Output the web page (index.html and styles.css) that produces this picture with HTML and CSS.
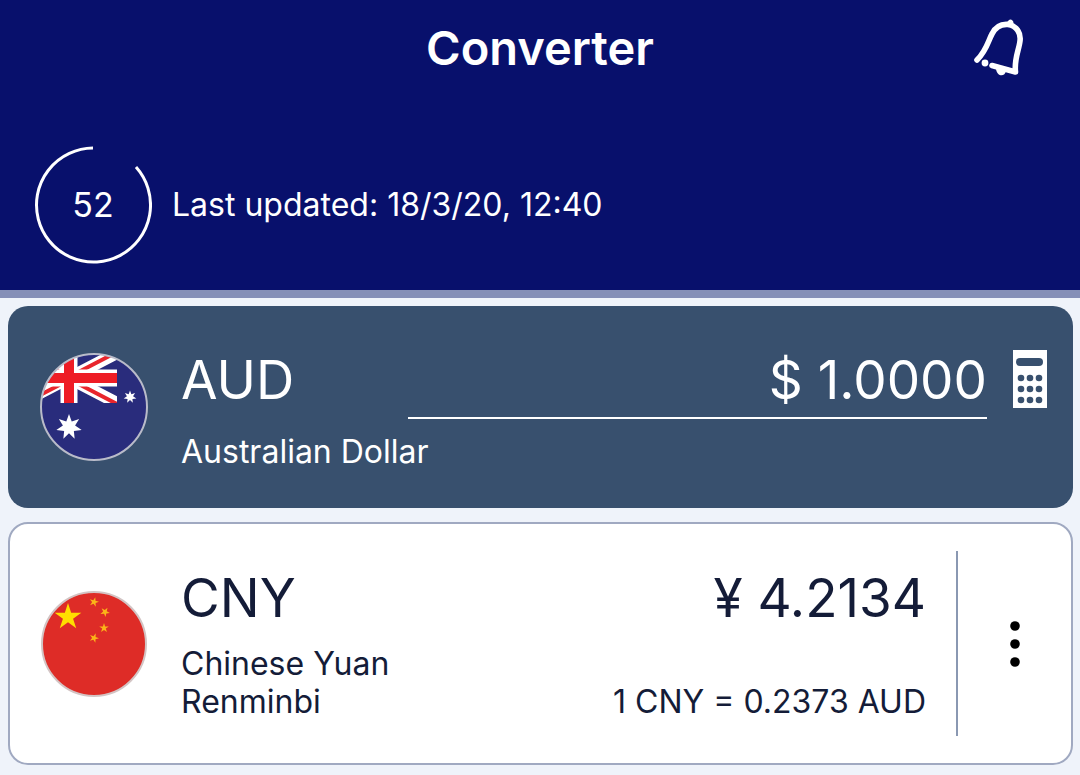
FILE: index.html
```html
<!DOCTYPE html>
<html lang="en">
<head>
<meta charset="utf-8">
<meta name="viewport" content="width=device-width, initial-scale=1">
<title>Converter</title>
<link rel="stylesheet" href="styles.css">
</head>
<body>
<svg class="symbols" aria-hidden="true">
  <defs>
    <polygon id="star5" points="0,-10 2.25,-3.09 9.51,-3.09 3.63,1.18 5.88,8.09 0,3.82 -5.88,8.09 -3.63,1.18 -9.51,-3.09 -2.25,-3.09"/>
    <polygon id="star7" points="0,-10 2.08,-4.32 7.82,-6.23 4.68,-1.07 9.75,2.23 3.75,2.99 4.34,9.01 0,4.8 -4.34,9.01 -3.75,2.99 -9.75,2.23 -4.68,-1.07 -7.82,-6.23 -2.08,-4.32"/>
    <clipPath id="disc"><circle cx="54" cy="55" r="53"/></clipPath>
    <clipPath id="canton"><rect x="-19" y="1" width="96" height="50"/></clipPath>
  </defs>
</svg>

<header class="header">
  <div class="titlebar">
    <h1 class="title">Converter</h1>
    <button class="icon-button bell" type="button" aria-label="Alerts">
      <svg width="60" height="64" viewBox="0 0 60 64" fill="none" stroke="#fff" stroke-width="5.6" stroke-linecap="round" stroke-linejoin="round">
        <path d="M7 44C17 34 18 25 22 18C26 10 32 8 38 8.500C47 10 51 17 50 25C49 34 44 43 45.500 56L22 49.500"/>
        <path d="M39 8L40.500 6.500"/>
        <circle cx="15" cy="47" r="3.400" fill="#fff" stroke="none"/>
        <path d="M26 53C27 61 35 61 36 55Z" fill="#fff" stroke="none"/>
      </svg>
    </button>
  </div>
  <div class="status">
    <div class="timer">
      <svg class="timer-ring" viewBox="0 0 118 118" fill="none" stroke="#fff" stroke-width="3">
        <path d="M59 2A57 57 0 1 0 102 21"/>
      </svg>
      <span class="timer-value">52</span>
    </div>
    <p class="updated">Last updated: 18/3/20, 12:40</p>
  </div>
</header>

<main class="list">
  <section class="card card-base">
    <svg class="flag" viewBox="0 0 108 110" role="img" aria-label="Australia">
      <g clip-path="url(#disc)">
        <rect width="108" height="110" fill="#292c7c"/>
        <g clip-path="url(#canton)">
          <path d="M-19 1L77 51M-19 51L77 1" stroke="#fff" stroke-width="12"/>
          <path d="M29 27L77 52M29 25L77 0M-19 0L29 25M-19 53L29 28" stroke="#e8252c" stroke-width="4"/>
          <path d="M29 0V51M-19 26H77" stroke="#fff" stroke-width="17"/>
          <path d="M29 0V51M-19 26H77" stroke="#ee1c25" stroke-width="10"/>
        </g>
        <use href="#star7" fill="#fff" transform="translate(29 75) scale(1.3)"/>
        <use href="#star7" fill="#fff" transform="translate(90 45) scale(.65)"/>
      </g>
      <circle cx="54" cy="55" r="53" fill="none" stroke="#b9bbc9" stroke-width="2"/>
    </svg>
    <div class="details">
      <div class="row">
        <label class="code" for="amount">AUD</label>
        <input class="amount" id="amount" type="text" inputmode="decimal" value="$ 1.0000">
      </div>
      <p class="name">Australian Dollar</p>
    </div>
    <button class="icon-button calculator" type="button" aria-label="Calculator">
      <svg width="34" height="58" viewBox="0 0 34 58">
        <rect width="34" height="58" fill="#fff"/>
        <g fill="#38506e">
          <rect x="3" y="8" width="27" height="8" rx="4"/>
          <circle cx="8" cy="28" r="3.300"/><circle cx="17" cy="28" r="3.300"/><circle cx="26" cy="28" r="3.300"/>
          <circle cx="8" cy="39" r="3.300"/><circle cx="17" cy="39" r="3.300"/><circle cx="26" cy="39" r="3.300"/>
          <circle cx="8" cy="50" r="3.300"/><circle cx="17" cy="50" r="3.300"/><circle cx="26" cy="50" r="3.300"/>
        </g>
      </svg>
    </button>
  </section>

  <section class="card card-quote">
    <svg class="flag" viewBox="0 0 108 110" role="img" aria-label="China">
      <circle cx="54" cy="55" r="52" fill="#de2c27" stroke="#d3c4c4" stroke-width="2"/>
      <g fill="#ffde00">
        <use href="#star5" transform="translate(28 28) scale(1.4)"/>
        <g fill="#fbb418">
          <use href="#star5" transform="translate(54 13) rotate(15) scale(.5)"/>
          <use href="#star5" transform="translate(65 23) rotate(30) scale(.5)"/>
          <use href="#star5" transform="translate(64 39) scale(.5)"/>
          <use href="#star5" transform="translate(54 49) rotate(20) scale(.5)"/>
        </g>
      </g>
    </svg>
    <div class="details">
      <h2 class="code">CNY</h2>
      <p class="name">Chinese Yuan<br>Renminbi</p>
    </div>
    <div class="quote">
      <p class="value">¥ 4.2134</p>
      <p class="rate">1 CNY = 0.2373 AUD</p>
    </div>
    <div class="actions">
      <button class="icon-button" type="button" aria-label="More options">
        <svg width="12" height="48" viewBox="0 0 12 48" fill="#000">
          <circle cx="6" cy="6" r="4.800"/><circle cx="6" cy="24" r="4.800"/><circle cx="6" cy="42" r="4.800"/>
        </svg>
      </button>
    </div>
  </section>
</main>
</body>
</html>
```

FILE: styles.css
```css
* {
  box-sizing: border-box;
}

body {
  margin: 0;
  background: #eff3fa;
  color: #141c38;
  font-family: Inter, "Liberation Sans", sans-serif;
  font-size: 32px;
  line-height: 38px;
}

h1, h2, p {
  margin: 0;
  font-weight: 400;
}

.symbols {
  position: absolute;
  width: 0;
  height: 0;
}

.icon-button {
  display: flex;
  padding: 0;
  border: 0;
  background: none;
  cursor: pointer;
}

.header {
  padding-bottom: 26px;
  border-bottom: 8px solid #858fb7;
  background: #08106c;
  color: #fff;
}

.titlebar {
  display: grid;
  grid-template-columns: 1fr auto 1fr;
  align-items: center;
  padding: 16px 50px 0;
}

.title {
  grid-column: 2;
  font-size: 47px;
  line-height: 64px;
  font-weight: 600;
}

.bell {
  justify-self: end;
}

.status {
  display: flex;
  align-items: center;
  gap: 20px;
  padding: 66px 34px 0;
}

.timer {
  display: grid;
  flex: none;
  place-items: center;
  width: 118px;
  height: 118px;
}

.timer-ring,
.timer-value {
  grid-area: 1 / 1;
}

.timer-value {
  font-size: 34px;
}

.list {
  display: grid;
  grid-template-columns: minmax(0, 1fr);
  gap: 14px;
  padding: 8px 7px 10px 8px;
}

.card {
  display: flex;
  border-radius: 20px;
}

.card-base {
  padding: 0 26px 0 32px;
  background: #38506e;
  color: #fff;
}

.card-quote {
  padding: 27px 0 27px 30px;
  border: 2px solid #a0a9c1;
  background: #fff;
}

.flag {
  flex: none;
  align-self: center;
  width: 108px;
  height: 110px;
  margin-right: 33px;
}

.details {
  flex: 1;
  min-width: 0;
}

.card-base .details {
  display: grid;
  grid-template-columns: minmax(0, 1fr);
  gap: 14px;
  padding: 42px 0 37px;
}

.row {
  display: flex;
}

.code,
.value,
.amount {
  font-size: 53px;
  line-height: 64px;
}

.row .code {
  width: 227px;
}

.amount {
  flex: 1;
  min-width: 0;
  height: 71px;
  padding: 0 0 5px;
  border: 0;
  border-bottom: 2px solid #fff;
  border-radius: 0;
  background: none;
  color: inherit;
  font-family: inherit;
  text-align: right;
}

.calculator {
  align-self: flex-start;
  margin: 44px 0 0 26px;
}

.card-quote .details,
.quote {
  display: flex;
  flex-direction: column;
  gap: 15px;
  padding: 15px 0;
}

.quote {
  justify-content: space-between;
  text-align: right;
}

.actions {
  display: grid;
  place-items: center;
  width: 115px;
  margin-left: 30px;
  border-left: 2px solid #8a98b2;
}
```
